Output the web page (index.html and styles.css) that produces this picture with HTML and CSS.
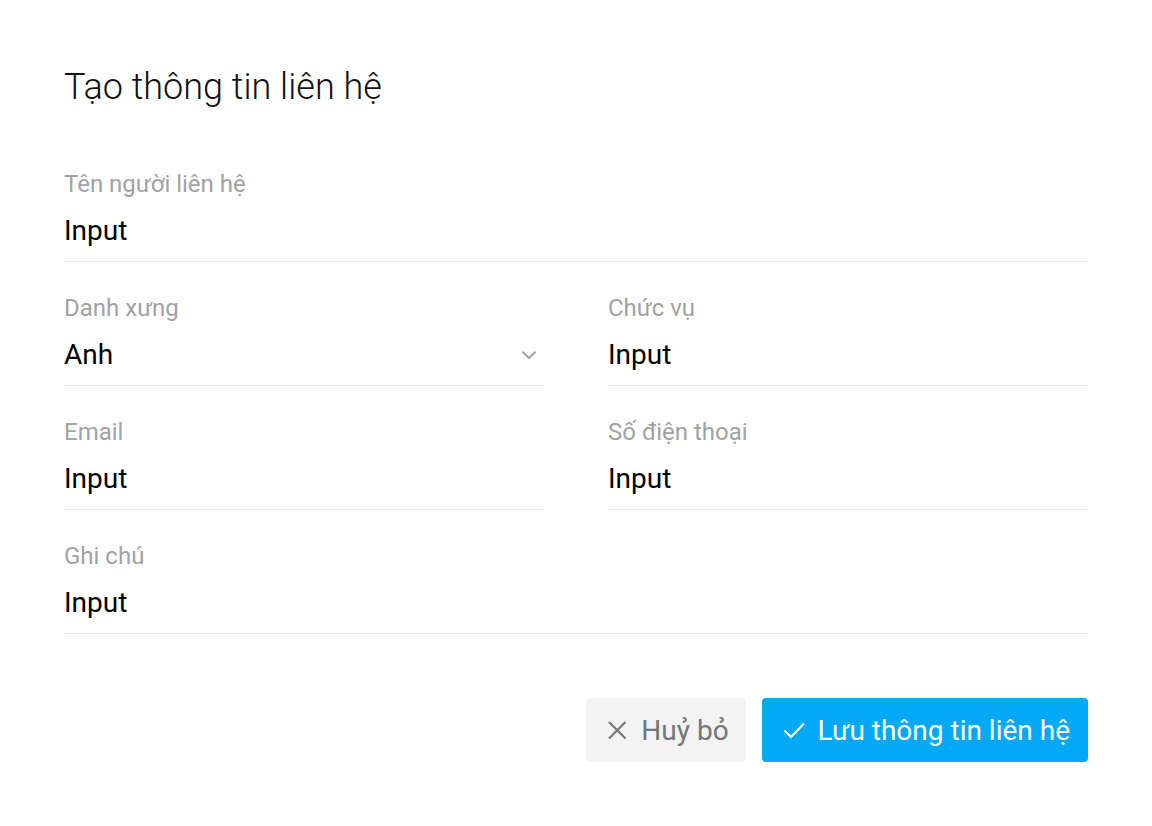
FILE: index.html
```html
<!DOCTYPE html>
<html lang="vi">
<head>
<meta charset="utf-8">
<title>Tạo thông tin liên hệ</title>
<link rel="stylesheet" href="styles.css">
</head>
<body>
<div class="dialog">
  <h1 class="title">Tạo thông tin liên hệ</h1>
  <div class="form">
    <div class="field wide">
      <div class="label">Tên người liên hệ</div>
      <div class="value">Input</div>
    </div>
    <div class="field">
      <div class="label">Danh xưng</div>
      <div class="value select">
        <span>Anh</span>
        <svg class="chev" width="16" height="10" viewBox="0 0 16 10"><polyline points="1.5,1.8 8,8 14.5,1.8" fill="none" stroke="#a3a3a3" stroke-width="2"/></svg>
      </div>
    </div>
    <div class="field">
      <div class="label">Chức vụ</div>
      <div class="value">Input</div>
    </div>
    <div class="field">
      <div class="label">Email</div>
      <div class="value">Input</div>
    </div>
    <div class="field">
      <div class="label">Số điện thoại</div>
      <div class="value">Input</div>
    </div>
    <div class="field wide">
      <div class="label">Ghi chú</div>
      <div class="value">Input</div>
    </div>
  </div>
  <div class="actions">
    <button class="btn cancel">
      <svg width="24" height="24" viewBox="0 0 24 24"><path d="M4 4 L20.5 20.5 M20.5 4 L4 20.5" fill="none" stroke="#777" stroke-width="2.2"/></svg>
      <span>Huỷ bỏ</span>
    </button>
    <button class="btn save">
      <svg width="24" height="24" viewBox="0 0 24 24"><polyline points="2.5,12.5 9,19 22,5.5" fill="none" stroke="#fff" stroke-width="2.2"/></svg>
      <span>Lưu thông tin liên hệ</span>
    </button>
  </div>
</div>
</body>
</html>
```

FILE: styles.css
```css
html, body {
  margin: 0;
  padding: 0;
  background: #ffffff;
}
body {
  font-family: Roboto, "Noto Sans", "Liberation Sans", sans-serif;
  color: #000;
}
.dialog {
  width: 1152px;
  height: 826px;
  box-sizing: border-box;
  padding: 64px;
  background: #fff;
  border-radius: 6px;
}
.title {
  margin: 0 0 28px;
  font-size: 36px;
  line-height: 46px;
  font-weight: 300;
  color: #111;
}
.form {
  display: grid;
  grid-template-columns: 1fr 1fr;
  column-gap: 64px;
}
.field {
  padding: 32px 0 12px;
  border-bottom: 1px solid #e6e6e6;
}
.field.wide {
  grid-column: 1 / span 2;
}
.label {
  font-size: 24px;
  line-height: 28px;
  color: #a2a2a2;
}
.value {
  margin-top: 15px;
  font-size: 28px;
  line-height: 36px;
  color: #000;
}
.select {
  display: flex;
  align-items: center;
  justify-content: space-between;
}
.chev {
  margin-right: 7px;
  margin-top: -1px;
}
.actions {
  margin-top: 64px;
  display: flex;
  justify-content: flex-end;
  gap: 16px;
}
.btn {
  height: 64px;
  display: flex;
  align-items: center;
  gap: 12px;
  padding: 0 18px 0 20px;
  border: none;
  border-radius: 4px;
  font-family: Roboto, "Noto Sans", "Liberation Sans", sans-serif;
  font-size: 28px;
  cursor: pointer;
}
.cancel {
  background: #f3f3f3;
  color: #757575;
  padding: 0 17px 0 19px;
}
.save {
  background: #03a9f4;
  color: #fff;
}
```
